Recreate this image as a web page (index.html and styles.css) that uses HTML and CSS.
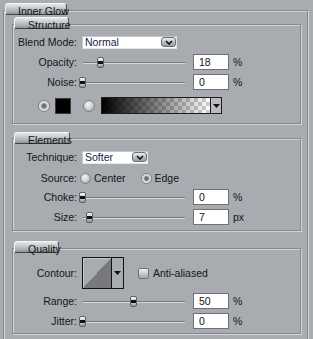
FILE: index.html
```html
<!DOCTYPE html>
<html>
<head>
<meta charset="utf-8">
<link rel="stylesheet" href="styles.css">
</head>
<body>
<div class="panel">
  <section class="grp grp-outer">
    <div class="tab tab-outer"><span>Inner Glow</span></div>

    <section class="grp grp-inner grp-structure">
      <div class="tab"><span>Structure</span></div>
      <div class="rows rows-structure">
        <div class="row">
          <span class="lbl">Blend Mode:</span>
          <div class="select select-blend">
            <span class="sel-text">Normal</span>
            <span class="sel-btn"><svg width="8" height="5" viewBox="0 0 8 5"><path d="M1 1 L4 4 L7 1" fill="none" stroke="#111" stroke-width="1.6"/></svg></span>
          </div>
        </div>
        <div class="row">
          <span class="lbl">Opacity:</span>
          <div class="slider"><span class="thumb" style="left:18%"></span></div>
          <div class="num">18</div><span class="unit">%</span>
        </div>
        <div class="row">
          <span class="lbl">Noise:</span>
          <div class="slider"><span class="thumb" style="left:0%"></span></div>
          <div class="num">0</div><span class="unit">%</span>
        </div>
        <div class="color-row">
          <span class="radio radio-on"></span>
          <span class="swatch"></span>
          <span class="radio radio-second"></span>
          <div class="gradient-pick">
            <span class="gradient"></span>
            <span class="grad-drop"><svg width="7" height="4" viewBox="0 0 7 4"><path d="M0 0 H7 L3.5 4 Z" fill="#111"/></svg></span>
          </div>
        </div>
      </div>
    </section>

    <section class="grp grp-inner grp-elements">
      <div class="tab"><span>Elements</span></div>
      <div class="rows rows-elements">
        <div class="row">
          <span class="lbl">Technique:</span>
          <div class="select select-tech">
            <span class="sel-text">Softer</span>
            <span class="sel-btn"><svg width="8" height="5" viewBox="0 0 8 5"><path d="M1 1 L4 4 L7 1" fill="none" stroke="#111" stroke-width="1.6"/></svg></span>
          </div>
        </div>
        <div class="row row-source">
          <span class="lbl">Source:</span>
          <div class="radio-group">
            <span class="radio"></span><span class="opt">Center</span>
            <span class="radio radio-on radio-edge"></span><span class="opt">Edge</span>
          </div>
        </div>
        <div class="row row-choke">
          <span class="lbl">Choke:</span>
          <div class="slider"><span class="thumb" style="left:0%"></span></div>
          <div class="num">0</div><span class="unit">%</span>
        </div>
        <div class="row">
          <span class="lbl">Size:</span>
          <div class="slider"><span class="thumb" style="left:7%"></span></div>
          <div class="num">7</div><span class="unit">px</span>
        </div>
      </div>
    </section>

    <section class="grp grp-inner grp-quality">
      <div class="tab"><span>Quality</span></div>
      <div class="rows rows-quality">
        <div class="row row-contour">
          <span class="lbl">Contour:</span>
          <div class="contour">
            <span class="contour-preview"></span>
            <span class="contour-drop"><svg width="7" height="4" viewBox="0 0 7 4"><path d="M0 0 H7 L3.5 4 Z" fill="#111"/></svg></span>
          </div>
          <span class="checkbox"></span>
          <span class="opt">Anti-aliased</span>
        </div>
        <div class="row">
          <span class="lbl">Range:</span>
          <div class="slider"><span class="thumb" style="left:50%"></span></div>
          <div class="num">50</div><span class="unit">%</span>
        </div>
        <div class="row">
          <span class="lbl">Jitter:</span>
          <div class="slider"><span class="thumb" style="left:0%"></span></div>
          <div class="num">0</div><span class="unit">%</span>
        </div>
      </div>
    </section>
  </section>
</div>
</body>
</html>
```

FILE: styles.css
```css
html, body {
  margin: 0;
  padding: 0;
  background: #a8abb0;
  overflow: hidden;
}

body {
  font-family: "Liberation Sans", Arial, sans-serif;
  font-size: 10.5px;
  color: #161616;
}

.panel {
  padding: 10px 5px 0 3px;
}

.grp {
  border: 1px solid #84878b;
  box-shadow: inset 1px 1px 0 #d2d4d7, 1px 1px 0 #d2d4d7;
}

.grp-outer {
  border-bottom: none;
  padding-bottom: 5px;
}

.grp-inner {
  margin-left: 8px;
  margin-right: 6px;
}

.grp-structure { margin-top: 9px; }
.grp-elements { margin-top: 14px; }
.grp-quality { margin-top: 17px; }

.tab {
  display: block;
  width: fit-content;
  height: 12px;
  box-sizing: border-box;
  margin-top: -8px;
  margin-left: 1px;
  padding: 1px 0 0 13px;
  line-height: 12px;
  white-space: nowrap;
  background: linear-gradient(#e6e8ea, #c7cacd 40%, #a7aaae 80%, #8f9296);
  border: 1px solid;
  border-color: #f4f5f6 #505357 #404347 #eef0f2;
  border-radius: 3px 3px 2px 2px;
}

.tab span {
  display: inline-block;
  margin-right: -3px;
}

.tab-outer {
  padding-left: 12px;
}

.grp-elements > .tab {
  margin-top: -7px;
}

.rows {
  display: flex;
  flex-direction: column;
  gap: 4px;
}

.rows-structure { padding: 5px 0 9px; }
.rows-elements { padding: 5px 0 5px; }
.rows-quality { padding: 4px 0 4px; }

.row {
  display: flex;
  align-items: center;
  height: 16px;
}

.row-source { margin-top: 1px; }
.row-choke { margin-top: -1px; }

.row-contour {
  height: 32px;
}

.lbl {
  width: 64px;
  text-align: right;
  margin-right: 5px;
  white-space: nowrap;
}

/* select */
.select {
  display: flex;
  align-items: center;
  justify-content: space-between;
  height: 13px;
  box-sizing: border-box;
  background: #fff;
  border: 1px solid #e4e5e7;
  border-top-color: #c4c6c9;
  border-left-color: #c4c6c9;
  padding-left: 2px;
}

.select-blend { width: 95px; }
.select-tech { width: 66px; }

.sel-text {
  color: #17224a;
  line-height: 11px;
}

.sel-btn {
  display: flex;
  align-items: center;
  justify-content: center;
  width: 15px;
  height: 10px;
  box-sizing: border-box;
  border: 1px solid #6c6f73;
  border-radius: 3px;
  background: linear-gradient(#eceef0, #b6b9bd 60%, #9a9da1);
}

/* slider */
.slider {
  position: relative;
  width: 102px;
  height: 16px;
  margin-left: 1px;
}

.slider::before {
  content: "";
  position: absolute;
  left: 0;
  right: 0;
  top: 8px;
  height: 1px;
  background: #76797d;
  box-shadow: 0 1px 0 #d8dadc;
}

.thumb {
  position: absolute;
  top: 3px;
  width: 7px;
  height: 11px;
  margin-left: -4px;
  box-sizing: border-box;
  border: 1px solid #5e6165;
  border-radius: 2px;
  background: linear-gradient(#fbfbfb, #d6d7d8 30%, #111 38%, #111 62%, #bfc1c3 70%, #8d9094);
}

.num {
  width: 36px;
  height: 16px;
  box-sizing: border-box;
  margin-left: 8px;
  padding-left: 5px;
  background: #fff;
  border: 1px solid #6e7175;
  line-height: 14px;
  color: #141414;
}

.unit {
  margin-left: 4px;
}

/* color row */
.color-row {
  display: flex;
  align-items: center;
  height: 17px;
  margin-top: 3px;
  padding-left: 25px;
}

.radio {
  display: inline-block;
  width: 11px;
  height: 11px;
  box-sizing: border-box;
  border-radius: 50%;
  border: 1px solid #7b7e82;
  background: radial-gradient(circle at 40% 35%, #f3f4f5 0%, #d3d5d8 45%, #8f9296 100%);
}

.radio-on {
  background: radial-gradient(circle at 50% 50%, #5d6064 0%, #7c7f83 30%, #c9cbce 45%, #eceef0 70%, #9c9fa3 100%);
}

.color-row .radio {
  width: 12px;
  height: 12px;
}

.swatch {
  width: 16px;
  height: 16px;
  box-sizing: border-box;
  margin-left: 5px;
  background: #000;
  border: 1px solid #3a3a3a;
}

.radio-second {
  margin-left: 12px;
}

.gradient-pick {
  display: flex;
  width: 121px;
  height: 17px;
  box-sizing: border-box;
  margin-left: 6px;
  border: 1px solid #1c1c1c;
}

.gradient {
  flex: 1;
  background:
    linear-gradient(to right, rgba(0,0,0,1), rgba(0,0,0,0)),
    repeating-conic-gradient(#cfcfcf 0 25%, #ffffff 0 50%) 0 0 / 8px 8px;
}

.grad-drop {
  display: flex;
  align-items: center;
  justify-content: center;
  width: 10px;
  border-left: 1px solid #1c1c1c;
  background: #b9bbbe;
}

/* source radios */
.radio-group {
  display: flex;
  align-items: center;
  margin-left: -2px;
}

.radio-group .opt {
  margin-left: 3px;
}

.radio-edge {
  margin-left: 15px;
}

/* contour */
.contour {
  display: flex;
  width: 42px;
  height: 32px;
  box-sizing: border-box;
  border: 1px solid #111;
}

.contour-preview {
  flex: 1;
  background: linear-gradient(to top left, #77797c 50%, #a9acaf 50%);
  box-shadow: inset 1px 1px 0 #c4c6c9;
}

.contour-drop {
  display: flex;
  align-items: center;
  justify-content: center;
  width: 11px;
  border-left: 1px solid #111;
  background: #a9acaf;
}

.checkbox {
  width: 11px;
  height: 11px;
  box-sizing: border-box;
  margin-left: 14px;
  border: 1px solid #6f7276;
  border-radius: 2px;
  background: linear-gradient(#eef0f1, #c6c8cb 55%, #a2a5a9);
}

.row-contour .opt {
  margin-left: 4px;
}
```
